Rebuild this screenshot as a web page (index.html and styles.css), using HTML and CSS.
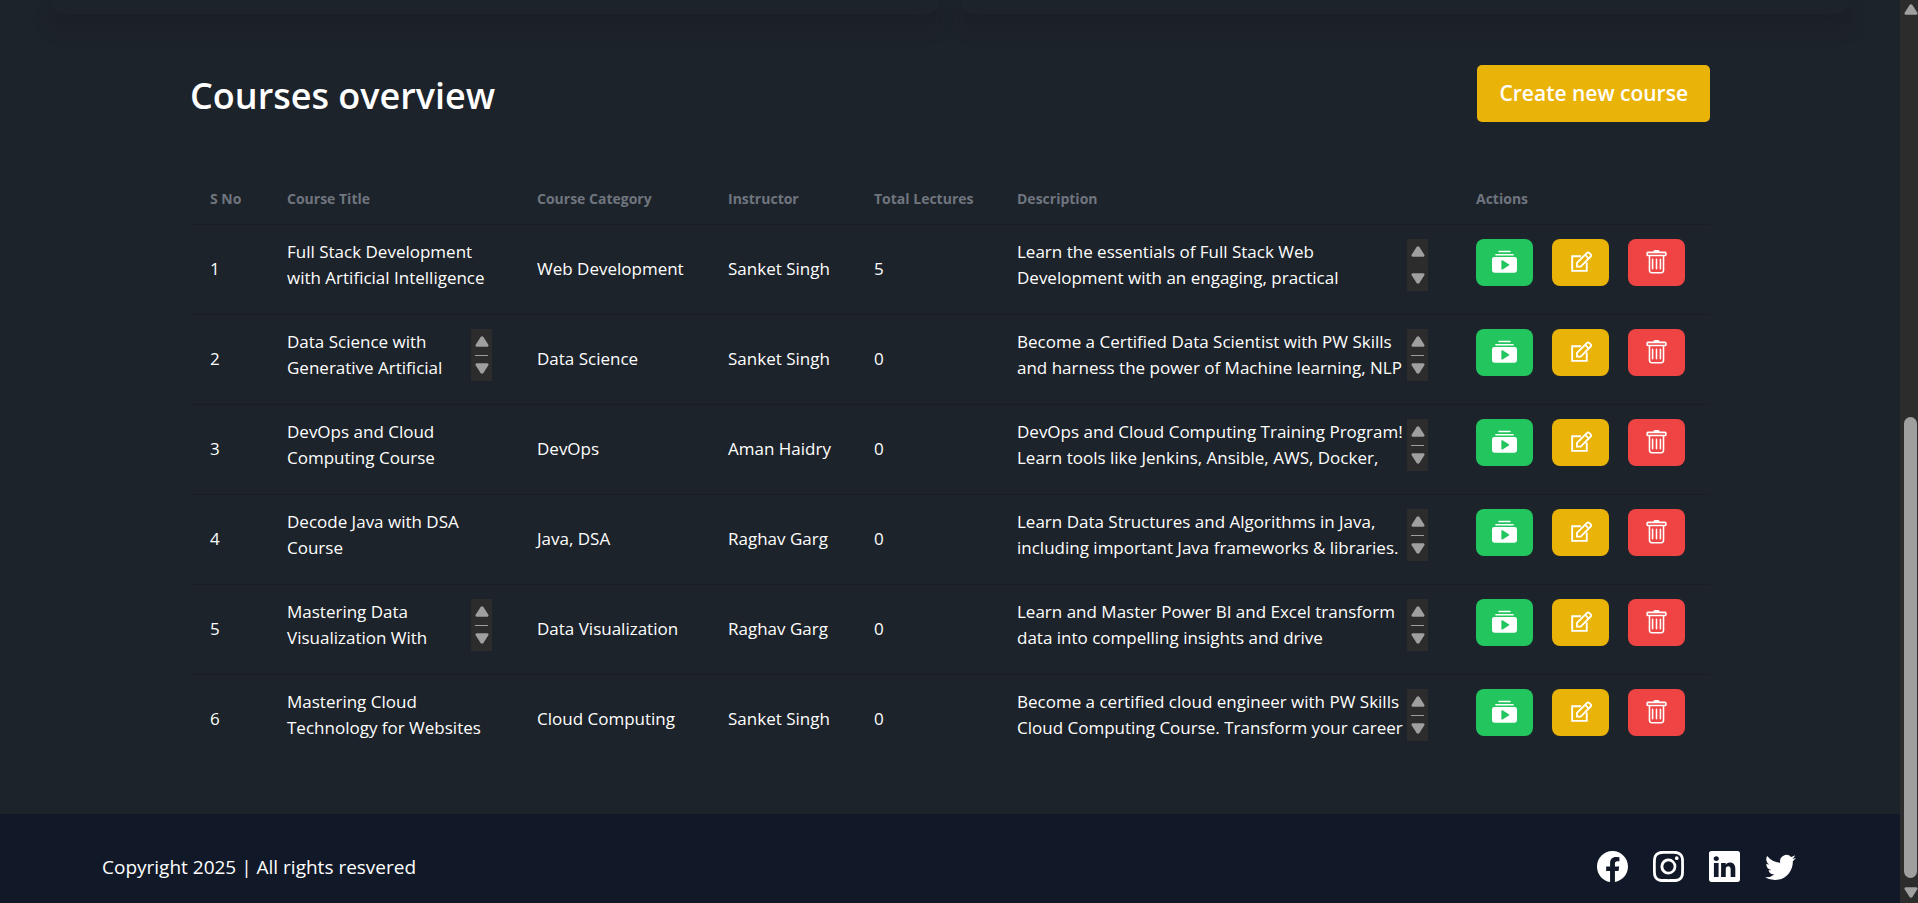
FILE: index.html
```
<!DOCTYPE html>
<html lang="en">
<head>
<meta charset="utf-8">
<title>Courses overview</title>
<link rel="stylesheet" href="styles.css">
</head>
<body>
<svg class="sprite" aria-hidden="true">
  <symbol id="play" viewBox="0 0 16 16"><path d="M2.5 3.5a.5.5 0 0 1 0-1h11a.5.5 0 0 1 0 1zm2-2a.5.5 0 0 1 0-1h7a.5.5 0 0 1 0 1zM0 13a1.500 1.500 0 0 0 1.500 1.500h13A1.500 1.500 0 0 0 16 13V6a1.500 1.500 0 0 0-1.500-1.500h-13A1.500 1.500 0 0 0 0 6zm6.258-6.437a.5.5 0 0 1 .507.013l4 2.500a.5.5 0 0 1 0 .848l-4 2.500A.5.5 0 0 1 6 12V7a.5.5 0 0 1 .258-.437"/></symbol>
  <symbol id="edit" viewBox="0 0 24 24"><g fill="none" stroke="currentColor" stroke-width="1.800"><path d="M12.500 6H4v14h14v-8"/><path d="M8.600 16v-3.600L18.300 2.700a1.400 1.400 0 0 1 2 0l1.500 1.500a1.400 1.400 0 0 1 0 2L12.200 16z"/><path d="M16.500 4.700l3.300 3.300"/></g></symbol>
  <symbol id="trash" viewBox="0 0 16 16"><path d="M5.500 5.500A.5.5 0 0 1 6 6v6a.5.5 0 0 1-1 0V6a.5.5 0 0 1 .5-.5m2.500 0a.5.5 0 0 1 .5.5v6a.5.5 0 0 1-1 0V6a.5.5 0 0 1 .5-.5m3 .5a.5.5 0 0 0-1 0v6a.5.5 0 0 0 1 0z"/><path d="M14.500 3a1 1 0 0 1-1 1H13v9a2 2 0 0 1-2 2H5a2 2 0 0 1-2-2V4h-.5a1 1 0 0 1-1-1V2a1 1 0 0 1 1-1H6a1 1 0 0 1 1-1h2a1 1 0 0 1 1 1h3.500a1 1 0 0 1 1 1zM4.118 4 4 4.059V13a1 1 0 0 0 1 1h6a1 1 0 0 0 1-1V4.059L11.882 4zM2.500 3h11V2h-11z"/></symbol>
  <symbol id="up" viewBox="0 0 14 11"><path d="M5.600 1a2 2 0 0 1 2.800 0l4.800 7.500a1.400 1.400 0 0 1-1 2.300H1.800a1.400 1.400 0 0 1-1-2.300z"/></symbol>
  <symbol id="down" viewBox="0 0 14 11"><path d="M5.600 10a2 2 0 0 0 2.800 0l4.800-7.500a1.400 1.400 0 0 0-1-2.300H1.800a1.400 1.400 0 0 0-1 2.300z"/></symbol>
  <symbol id="facebook" viewBox="0 0 16 16"><path d="M16 8.049c0-4.446-3.582-8.050-8-8.050C3.580 0-.002 3.603-.002 8.050c0 4.017 2.926 7.347 6.750 7.951v-5.625h-2.030V8.050H6.750V6.275c0-2.017 1.195-3.131 3.022-3.131.876 0 1.791.157 1.791.157v1.980h-1.009c-.993 0-1.303.621-1.303 1.258v1.510h2.218l-.354 2.326H9.250V16c3.824-.604 6.750-3.934 6.750-7.951"/></symbol>
  <symbol id="instagram" viewBox="0 0 16 16"><path d="M8 0C5.829 0 5.556.010 4.703.048 3.850.088 3.269.222 2.760.420a3.900 3.900 0 0 0-1.417.923A3.900 3.900 0 0 0 .420 2.760C.222 3.268.087 3.850.048 4.700.010 5.555 0 5.827 0 8.001c0 2.172.010 2.444.048 3.297.040.852.174 1.433.372 1.942.205.526.478.972.923 1.417.444.445.890.719 1.416.923.510.198 1.090.333 1.942.372C5.555 15.990 5.827 16 8 16s2.444-.010 3.298-.048c.851-.040 1.434-.174 1.943-.372a3.900 3.900 0 0 0 1.416-.923c.445-.445.718-.891.923-1.417.197-.509.332-1.090.372-1.942C15.990 10.445 16 10.173 16 8s-.010-2.445-.048-3.299c-.040-.851-.175-1.433-.372-1.941a3.900 3.900 0 0 0-.923-1.417A3.900 3.900 0 0 0 13.240.420c-.510-.198-1.092-.333-1.943-.372C10.443.010 10.172 0 7.998 0zm-.717 1.442h.718c2.136 0 2.389.007 3.232.046.780.035 1.204.166 1.486.275.373.145.640.319.920.599s.453.546.598.920c.110.281.240.705.275 1.485.039.843.047 1.096.047 3.231s-.008 2.389-.047 3.232c-.035.780-.166 1.203-.275 1.485a2.500 2.500 0 0 1-.599.919c-.280.280-.546.453-.920.598-.280.110-.704.240-1.485.276-.843.038-1.096.047-3.232.047s-2.390-.009-3.233-.047c-.780-.036-1.203-.166-1.485-.276a2.500 2.500 0 0 1-.920-.598 2.500 2.500 0 0 1-.600-.920c-.109-.281-.240-.705-.275-1.485-.038-.843-.046-1.096-.046-3.233s.008-2.388.046-3.231c.036-.780.166-1.204.276-1.486.145-.373.319-.640.599-.920s.546-.453.920-.598c.282-.110.705-.240 1.485-.276.738-.034 1.024-.044 2.515-.045zm4.988 1.328a.960.960 0 1 0 0 1.920.960.960 0 0 0 0-1.920m-4.270 1.122a4.109 4.109 0 1 0 0 8.217 4.109 4.109 0 0 0 0-8.217m0 1.441a2.667 2.667 0 1 1 0 5.334 2.667 2.667 0 0 1 0-5.334"/></symbol>
  <symbol id="linkedin" viewBox="0 0 16 16"><path d="M0 1.146C0 .513.526 0 1.175 0h13.650C15.474 0 16 .513 16 1.146v13.708c0 .633-.526 1.146-1.175 1.146H1.175C.526 16 0 15.487 0 14.854zm4.943 12.248V6.169H2.542v7.225zm-1.200-8.212c.837 0 1.358-.554 1.358-1.248-.015-.709-.520-1.248-1.342-1.248S2.400 3.226 2.400 3.934c0 .694.521 1.248 1.327 1.248zm4.908 8.212V9.359c0-.216.016-.432.080-.586.173-.431.568-.878 1.232-.878.869 0 1.216.662 1.216 1.634v3.865h2.401V9.250c0-2.220-1.184-3.252-2.764-3.252-1.274 0-1.845.700-2.165 1.193v.025h-.016l.016-.025V6.169h-2.400c.030.678 0 7.225 0 7.225z"/></symbol>
  <symbol id="twitter" viewBox="0 0 16 16"><path d="M5.026 15c6.038 0 9.341-5.003 9.341-9.334q.002-.211-.006-.422A6.700 6.700 0 0 0 16 3.542a6.700 6.700 0 0 1-1.889.518 3.300 3.300 0 0 0 1.447-1.817 6.500 6.500 0 0 1-2.087.793A3.286 3.286 0 0 0 7.875 6.030a9.320 9.320 0 0 1-6.767-3.429 3.290 3.290 0 0 0 1.018 4.382A3.300 3.300 0 0 1 .640 6.575v.045a3.290 3.290 0 0 0 2.632 3.218 3.200 3.200 0 0 1-.865.115 3 3 0 0 1-.614-.057 3.280 3.280 0 0 0 3.067 2.277A6.600 6.600 0 0 1 .780 13.580a6 6 0 0 1-.780-.045A9.340 9.340 0 0 0 5.026 15"/></symbol>
</svg>

<div class="page">
  <div class="cards"><div class="card"></div><div class="card"></div></div>
  <main class="courses">
    <header class="courses-head">
      <h1>Courses overview</h1>
      <button type="button" class="create">Create new course</button>
    </header>
    <table class="table">
      <colgroup><col class="c-no"><col class="c-title"><col class="c-cat"><col class="c-inst"><col class="c-lec"><col class="c-desc"><col class="c-act"></colgroup>
      <thead><tr><th>S No</th><th>Course Title</th><th>Course Category</th><th>Instructor</th><th>Total Lectures</th><th>Description</th><th>Actions</th></tr></thead>
      <tbody id="rows"></tbody>
    </table>
  </main>
  <footer class="footer">
    <span>Copyright 2025 | All rights resvered</span>
    <nav class="social">
      <a href="#" aria-label="Facebook"><svg><use href="#facebook"/></svg></a>
      <a href="#" aria-label="Instagram"><svg><use href="#instagram"/></svg></a>
      <a href="#" aria-label="LinkedIn"><svg><use href="#linkedin"/></svg></a>
      <a href="#" aria-label="Twitter"><svg><use href="#twitter"/></svg></a>
    </nav>
  </footer>
</div>
<div class="page-scroll" aria-hidden="true">
  <svg class="arrow"><use href="#up"/></svg>
  <div class="page-track"><div class="page-thumb"></div></div>
  <svg class="arrow"><use href="#down"/></svg>
</div>
<script src="courses.js"></script>
</body>
</html>
```

FILE: courses.js
```
const courses = [
  { title: ["Full Stack Development", "with Artificial Intelligence"], category: "Web Development", instructor: "Sanket Singh", lectures: 5, description: ["Learn the essentials of Full Stack Web", "Development with an engaging, practical"], long: true },
  { title: ["Data Science with", "Generative Artificial"], scrollTitle: true, category: "Data Science", instructor: "Sanket Singh", lectures: 0, description: ["Become a Certified Data Scientist with PW Skills", "and harness the power of Machine learning, NLP"] },
  { title: ["DevOps and Cloud", "Computing Course"], category: "DevOps", instructor: "Aman Haidry", lectures: 0, description: ["DevOps and Cloud Computing Training Program!", "Learn tools like Jenkins, Ansible, AWS, Docker,"] },
  { title: ["Decode Java with DSA", "Course"], category: "Java, DSA", instructor: "Raghav Garg", lectures: 0, description: ["Learn Data Structures and Algorithms in Java,", "including important Java frameworks & libraries."] },
  { title: ["Mastering Data", "Visualization With"], scrollTitle: true, category: "Data Visualization", instructor: "Raghav Garg", lectures: 0, description: ["Learn and Master Power BI and Excel transform", "data into compelling insights and drive"] },
  { title: ["Mastering Cloud", "Technology for Websites"], category: "Cloud Computing", instructor: "Sanket Singh", lectures: 0, description: ["Become a certified cloud engineer with PW Skills", "Cloud Computing Course. Transform your career"] }
];

const esc = (s) => s.replace(/&/g, "&amp;");
const scroller = (thumb) => `<span class="scroller" aria-hidden="true"><svg class="arrow"><use href="#up"/></svg>${thumb ? '<i class="thumb"></i>' : ""}<svg class="arrow"><use href="#down"/></svg></span>`;
const box = (lines, bar, size) => `<div class="box ${size}"><p>${lines.map(esc).join("<br>")}</p>${bar}</div>`;
const action = (kind, icon, label) => `<button type="button" class="btn ${kind}" aria-label="${label}"><svg><use href="#${icon}"/></svg></button>`;

document.getElementById("rows").innerHTML = courses.map((c, i) => `<tr>
  <td>${i + 1}</td>
  <td>${box(c.title, c.scrollTitle ? scroller(true) : "", "box-title")}</td>
  <td>${c.category}</td>
  <td>${c.instructor}</td>
  <td>${c.lectures}</td>
  <td>${box(c.description, scroller(!c.long), "box-desc")}</td>
  <td><div class="actions">${action("green", "play", "View lectures")}${action("yellow", "edit", "Edit course")}${action("red", "trash", "Delete course")}</div></td>
</tr>`).join("");
```

FILE: styles.css
```
* { box-sizing: border-box; }
body {
  margin: 0;
  min-height: 100vh;
  display: flex;
  background: #1d232a;
  color: #fff;
  font-family: "Segoe UI", "Open Sans", "Noto Sans", sans-serif;
  font-size: 17px;
  line-height: 26px;
  overflow: hidden;
}
h1, p { margin: 0; font-weight: inherit; }
svg { display: block; fill: currentColor; }
.sprite { position: absolute; width: 0; height: 0; }
button { border: 0; padding: 0; color: #fff; font: inherit; cursor: pointer; }

.page { flex: 1; min-width: 0; display: flex; flex-direction: column; }
.cards { display: grid; grid-template-columns: 1fr 1fr; gap: 20px; padding: 0 50px; }
.card {
  height: 14px;
  border-radius: 0 0 20px 20px;
  background: #1d232a;
  box-shadow: 0 13px 19px -4px #1a1a2280, 0 5px 8px -5px #1a1a2280;
}

.courses { width: 80%; margin: 0 auto; padding-top: 51px; }
.courses-head { display: flex; justify-content: space-between; align-items: center; margin-bottom: 50px; }
h1 { padding-top: 4px; font-size: 36px; line-height: 50px; font-weight: 600; }
.create {
  padding: 14px 22px;
  border-radius: 5px;
  background: #eab308;
  font-size: 21px;
  line-height: 29px;
  font-weight: 600;
}

.table { width: 100%; table-layout: fixed; border-collapse: collapse; text-align: left; }
.c-no { width: 77px; }
.c-title { width: 250px; }
.c-cat { width: 191px; }
.c-inst { width: 146px; }
.c-lec { width: 143px; }
.c-desc { width: 459px; }
th { height: 52px; padding: 2px 0 0 20px; color: #6f757f; font-size: 14px; font-weight: 700; }
td { height: 90px; padding: 0 0 0 20px; vertical-align: middle; white-space: nowrap; }
tr { border-bottom: 1px solid #191e24; }
tbody tr:last-child { border-bottom: 0; }
.box { display: flex; justify-content: space-between; height: 52px; margin-bottom: 8px; }
.box-title { width: 205px; }
.box-desc { width: 411px; }
.box p { flex: 1; width: 0; }
.scroller {
  width: 21px;
  padding: 7px 0;
  display: flex;
  flex-direction: column;
  align-items: center;
  justify-content: space-between;
  background: #2c2c2c;
}
.arrow { width: 14px; height: 11px; color: #9f9f9f; }
.thumb { width: 13px; height: 1px; background: #9f9f9f; }
.actions { display: flex; gap: 19px; margin-bottom: 13px; }
.btn { width: 57px; height: 47px; border-radius: 8px; display: grid; place-items: center; }
.btn svg { width: 25px; height: 25px; }
.green { background: #22c55e; }
.yellow { background: #eab308; }
.red { background: #ef4444; }

.footer {
  margin-top: auto;
  height: 89px;
  padding: 16px 104px 0 102px;
  display: flex;
  align-items: center;
  justify-content: space-between;
  background: #111827;
  font-size: 19px;
}
.social { display: flex; gap: 25px; }
.social a { color: #fff; }
.social svg { width: 31px; height: 31px; }

.page-scroll {
  width: 18px;
  height: 100vh;
  padding: 4px 0 5px 3px;
  display: flex;
  flex-direction: column;
  align-items: center;
  background: #2c2c2c;
}
.page-track { flex: 1; width: 13px; padding: 9px 0; display: flex; align-items: flex-end; }
.page-thumb { width: 100%; height: 54%; border-radius: 7px; background: #9f9f9f; }
```
